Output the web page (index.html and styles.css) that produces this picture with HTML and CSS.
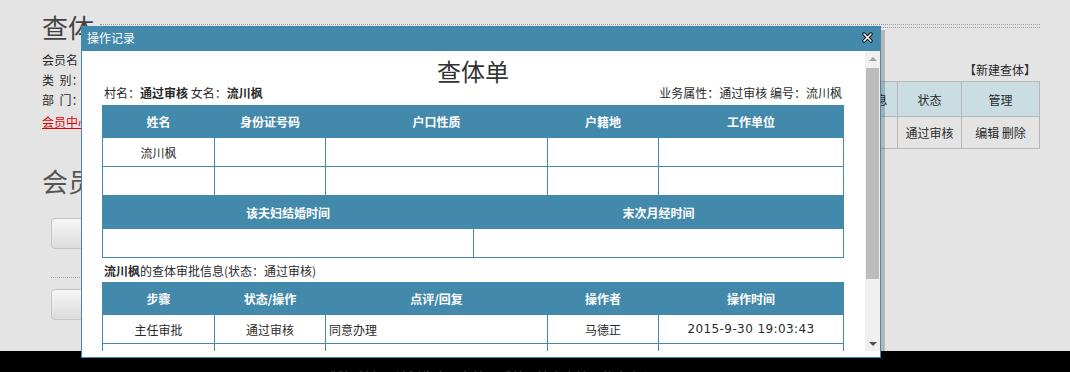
FILE: index.html
```html
<!DOCTYPE html>
<html lang="zh-CN">

<head>
    <meta charset="UTF-8">
    <title>查体</title>
    <link rel="stylesheet" href="styles.css">
</head>

<body>
    <div class="page">
        <div class="main">
            <div class="head">
                <h1>查体</h1>
                <div class="dots"></div>
            </div>
            <div class="cols">
                <div class="side">
                    <p>会员名&nbsp;：流川枫</p>
                    <p>类&nbsp;&nbsp;别：普通会员</p>
                    <p>部&nbsp;&nbsp;门：计生办</p>
                    <p class="home"><a href="#">会员中心首页</a></p>
                    <h2>会员菜单</h2>
                    <div class="btn">查体管理</div>
                    <div class="sep"></div>
                    <div class="btn">退出登录</div>
                </div>
                <div class="content">
                    <div class="new">【新建查体】</div>
                    <table class="list">
                        <colgroup>
                            <col><col><col><col>
                            <col style="width:68px"><col style="width:64px"><col style="width:78px">
                        </colgroup>
                        <tr>
                            <th>编号</th><th>女方姓名</th><th>男方姓名</th><th>查体时间</th>
                            <th>审批信息</th><th>状态</th><th>管理</th>
                        </tr>
                        <tr>
                            <td>1</td><td>流川枫</td><td>樱木花道</td><td>2015-9-30</td>
                            <td>查看</td><td>通过审核</td><td>编辑 删除</td>
                        </tr>
                    </table>
                </div>
            </div>
        </div>
        <div class="footer">版权所有：计划生育服务管理系统 &nbsp;&nbsp; 技术支持：信息中心</div>
    </div>

    <div class="dialog">
        <div class="dialog-title">
            <span>操作记录</span>
            <svg class="close" width="11" height="11" viewBox="0 0 11 11">
                <path d="M2 2 L9 9 M9 2 L2 9" stroke="#000" stroke-width="3.2" stroke-linecap="round"/>
                <path d="M2 2 L9 9 M9 2 L2 9" stroke="#fff" stroke-width="1.6" stroke-linecap="round"/>
            </svg>
        </div>
        <div class="dialog-body">
            <div class="sheet">
                <h2>查体单</h2>
                <div class="info">
                    <span>村名：<b>通过审核</b> 女名：<b>流川枫</b></span>
                    <span>业务属性：通过审核 编号：流川枫</span>
                </div>
                <table class="grid">
                    <colgroup>
                        <col style="width:112px"><col style="width:111px"><col style="width:222px"><col style="width:111px"><col>
                    </colgroup>
                    <tr><th>姓名</th><th>身份证号码</th><th>户口性质</th><th>户籍地</th><th>工作单位</th></tr>
                    <tr><td>流川枫</td><td></td><td></td><td></td><td></td></tr>
                    <tr><td></td><td></td><td></td><td></td><td></td></tr>
                </table>
                <table class="grid">
                    <colgroup><col style="width:371px"><col></colgroup>
                    <tr><th>该夫妇结婚时间</th><th>末次月经时间</th></tr>
                    <tr><td></td><td></td></tr>
                </table>
                <p class="approve"><b>流川枫</b>的查体审批信息(状态：通过审核)</p>
                <table class="grid">
                    <colgroup>
                        <col style="width:112px"><col style="width:111px"><col style="width:222px"><col style="width:111px"><col>
                    </colgroup>
                    <tr><th>步骤</th><th>状态/操作</th><th>点评/回复</th><th>操作者</th><th>操作时间</th></tr>
                    <tr><td>主任审批</td><td>通过审核</td><td class="left">同意办理</td><td>马德正</td><td class="num">2015-9-30 19:03:43</td></tr>
                    <tr><td>所长审批</td><td>通过审核</td><td class="left">同意</td><td>马德正</td><td class="num">2015-9-30 19:05:12</td></tr>
                </table>
            </div>
            <div class="scroll">
                <div class="arrow up"></div>
                <div class="thumb"></div>
                <div class="track"></div>
                <div class="arrow down"></div>
            </div>
        </div>
    </div>
</body>

</html>
```

FILE: styles.css
```css
body {
    margin: 0;
    background-color: #e4e4e4;
    font-family: "Noto Sans CJK SC", sans-serif;
    font-size: 12px;
    color: #2a2a2a;
}

.page {
    display: flex;
    flex-direction: column;
    height: 372px;
    overflow: hidden;
}

.main {
    flex-shrink: 0;
    height: 351px;
    padding: 12px 30px 0 42px;
    box-sizing: border-box;
    overflow: hidden;
}

.head {
    display: flex;
}

.head h1 {
    margin: 0;
    font-size: 26px;
    line-height: 30px;
    font-weight: normal;
    color: #444;
}

.dots {
    flex: 1;
    height: 2px;
    margin: 12px 0 0 6px;
    border-top: 1px dotted #999;
    border-bottom: 1px dotted #999;
}

.cols {
    display: flex;
    gap: 18px;
    margin-top: 8px;
}

.side {
    width: 240px;
}

.side p {
    margin: 0;
    line-height: 20px;
}

.side .home {
    margin-top: 2px;
}

.side a {
    color: #e00000;
}

.side h2 {
    margin: 34px 0 0;
    font-size: 26px;
    line-height: 30px;
    font-weight: normal;
    color: #555;
}

.btn {
    height: 29px;
    margin: 22px 0 0 9px;
    border: 1px solid #c4c4c4;
    border-radius: 4px;
    background: linear-gradient(#f6f6f6, #dcdcdc);
    line-height: 29px;
    text-align: center;
}

.sep {
    margin: 28px 0 0 9px;
    border-top: 1px dotted #aaa;
}

.sep + .btn {
    margin-top: 11px;
}

.content {
    flex: 1;
    padding-top: 12px;
}

.new {
    text-align: right;
    line-height: 16px;
    margin: 0 4px 3px 0;
}

.list {
    width: 100%;
    border-collapse: collapse;
    table-layout: fixed;
}

.list th,
.list td {
    border: 1px solid #b7b7b7;
    text-align: center;
    font-weight: normal;
    padding: 0;
}

.list th {
    height: 34px;
    background-color: #c9dde3;
}

.list td {
    height: 31px;
}

.footer {
    flex: 1;
    overflow: hidden;
    background-color: #000;
    color: #555;
    padding-top: 18px;
    padding-left: 330px;
    font-size: 13px;
    line-height: 16px;
}

/* 弹出层 */
.dialog {
    position: absolute;
    left: 81px;
    top: 26px;
    width: 798px;
    border: 1px solid #4389ab;
    background-color: #fff;
    box-shadow: 4px 4px 0 rgba(0, 0, 0, 0.2);
}

.dialog-title {
    display: flex;
    align-items: center;
    justify-content: space-between;
    height: 24px;
    padding: 0 7px 3px 5px;
    box-sizing: border-box;
    background-color: #4389ab;
    color: #fff;
    line-height: 18px;
}

.dialog-body {
    display: flex;
    height: 300px;
    margin-bottom: 6px;
}

.sheet {
    width: 742px;
    padding: 0 21px 0 20px;
    overflow: hidden;
}

.sheet h2 {
    margin: 0;
    padding-top: 5px;
    font-size: 24px;
    line-height: 30px;
    font-weight: normal;
    text-align: center;
    color: #333;
}

.info {
    display: flex;
    justify-content: space-between;
    line-height: 14px;
    padding: 0 2px;
    margin-bottom: 5px;
}

.grid {
    width: 742px;
    border-collapse: collapse;
    table-layout: fixed;
}

.grid th,
.grid td {
    border: 1px solid #4389ab;
    padding: 0;
    text-align: center;
}

.grid th {
    height: 31px;
    background-color: #4389ab;
    color: #fff;
}

.grid td {
    height: 28px;
}

.grid td.left {
    text-align: left;
    padding-left: 3px;
}

.grid td.num {
    font-family: "DejaVu Sans", sans-serif;
    font-size: 12px;
    letter-spacing: 0.4px;
}

.approve {
    margin: 6px 0 4px;
    padding-left: 2px;
    line-height: 14px;
}

.scroll {
    display: flex;
    flex-direction: column;
    width: 15px;
    background-color: #f0f0f0;
}

.arrow {
    height: 15px;
    display: flex;
    align-items: center;
    justify-content: center;
}

.arrow::before {
    content: "";
    border-left: 4px solid transparent;
    border-right: 4px solid transparent;
}

.arrow.up::before {
    border-bottom: 4px solid #a3a3a3;
}

.arrow.down::before {
    border-top: 4px solid #505050;
}

.thumb {
    height: 211px;
    margin: 2px 1px 0;
    background-color: #bcbcbc;
}

.track {
    flex: 1;
}
```
